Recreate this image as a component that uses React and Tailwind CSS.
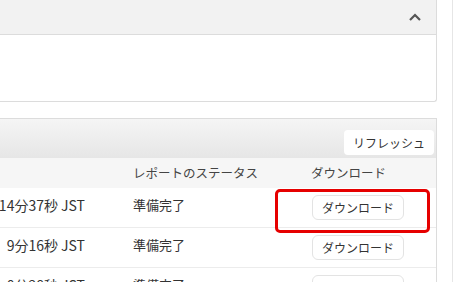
import React from "react";

const rows = [
  { time: "14分37秒 JST", status: "準備完了", highlight: true },
  { time: "9分16秒 JST", status: "準備完了" },
  { time: "0分28秒 JST", status: "準備完了" },
];

const font = { fontFamily: '"Noto Sans CJK JP", "Noto Sans", sans-serif' };

const App = () => {
  return (
    <div className="w-[466px] h-[282px] overflow-hidden bg-white flex items-stretch text-[#333]" style={font}>
      <div className="w-[437px] shrink-0 flex flex-col">
        {/* collapsible panel */}
        <div className="h-[102px] shrink-0 border-r border-b border-[#dcdcdc] rounded-br-[3px] flex flex-col">
          <div className="h-[35px] shrink-0 bg-[#f2f2f2] border-b border-[#dcdcdc] flex items-center justify-end pr-[14px]">
            <svg width="14" height="10" viewBox="0 0 14 10" fill="none">
              <path d="M2 8 L7 3 L12 8" stroke="#555" strokeWidth="2.2" />
            </svg>
          </div>
          <div className="flex-1"></div>
        </div>

        {/* report table */}
        <div className="mt-[16px] shrink-0 border-t border-r border-[#dcdcdc] flex flex-col">
          <div className="h-[39px] shrink-0 bg-gradient-to-b from-[#f5f5f5] to-[#e6e6e6] flex items-end justify-end pr-[2px] pb-[3px]">
            <button className="h-[25px] px-[9px] bg-white rounded-[4px] text-[12px] text-[#333]">
              リフレッシュ
            </button>
          </div>
          <div className="h-[30px] shrink-0 bg-[#f6f6f6] flex items-center text-[12.5px] text-[#444]">
            <div className="w-[133px]"></div>
            <div className="w-[178px]">レポートのステータス</div>
            <div>ダウンロード</div>
          </div>
          {rows.map((row, i) => (
            <div key={i} className="h-[40px] shrink-0 border-b border-[#ececec] flex text-[13px] text-[#333] relative">
              <div className="w-[133px] flex justify-end pr-[48px] pt-[7px] whitespace-nowrap overflow-hidden text-[14px]">
                {row.time}
              </div>
              <div className="w-[178px] pt-[7px]">{row.status}</div>
              <div className="pt-[7px]">
                <button className="h-[25px] px-[9px] ml-[1px] bg-white border border-[#e3e3e3] rounded-[6px] text-[12px] text-[#333]">
                  ダウンロード
                </button>
              </div>
              {row.highlight && (
                <div className="absolute left-[275px] top-[1px] w-[155px] h-[44px] border-[3px] border-[#e60000] rounded-[5px]"></div>
              )}
            </div>
          ))}
        </div>
      </div>
      <div className="ml-[15px] w-px bg-[#e6e6e6]"></div>
    </div>
  );
};

export default App;
